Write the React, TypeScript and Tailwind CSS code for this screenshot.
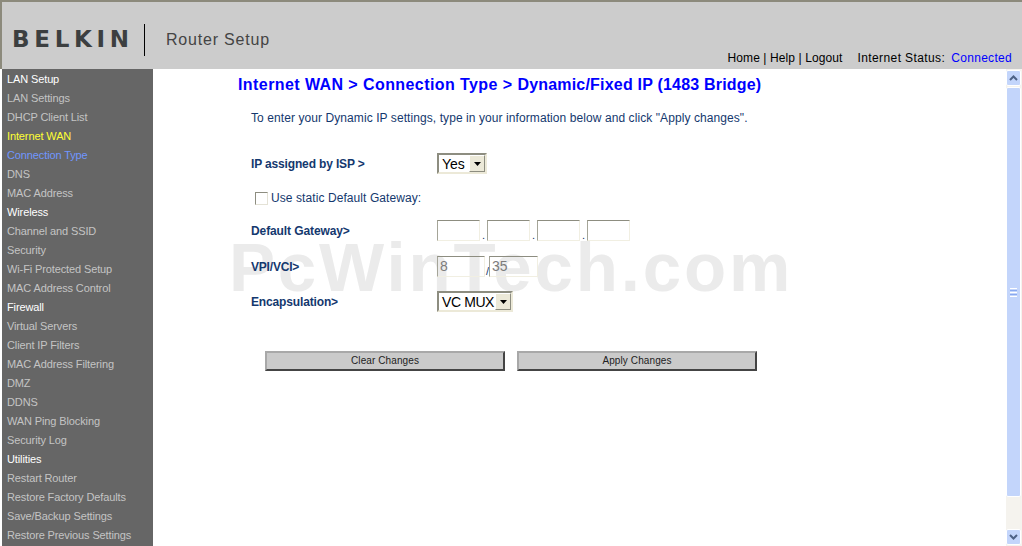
import React from 'react';

const font = "font-['Liberation_Sans',Arial,sans-serif]";

const menu: [string, string][] = [
  ['LAN Setup', 'h'], ['LAN Settings', 'n'], ['DHCP Client List', 'n'], ['Internet WAN', 'y'], ['Connection Type', 'b'], ['DNS', 'n'], ['MAC Address', 'n'],
  ['Wireless', 'h'], ['Channel and SSID', 'n'], ['Security', 'n'], ['Wi-Fi Protected Setup', 'n'], ['MAC Address Control', 'n'],
  ['Firewall', 'h'], ['Virtual Servers', 'n'], ['Client IP Filters', 'n'], ['MAC Address Filtering', 'n'], ['DMZ', 'n'], ['DDNS', 'n'], ['WAN Ping Blocking', 'n'], ['Security Log', 'n'],
  ['Utilities', 'h'], ['Restart Router', 'n'], ['Restore Factory Defaults', 'n'], ['Save/Backup Settings', 'n'], ['Restore Previous Settings', 'n'],
];

const menuColor: Record<string, string> = { h: 'text-white', n: 'text-[#c4c4c4]', y: 'text-[#ffff33]', b: 'text-[#7096ff]' };

const IpBox = ({ value = '', width = 'w-[43px]' }: { value?: string; width?: string }) => (
  <div className={`h-[21px] ${width} border border-t-[#8d8d80] border-l-[#a5a598] border-r-[#f1efe2] border-b-[#f1efe2] pl-[2px] text-[14px] leading-[19px] text-[#7c7c7c]`}>{value}</div>
);

const Select = ({ label, width, spacing = '' }: { label: string; width: string; spacing?: string }) => (
  <div className={`flex h-[21px] ${width} items-center border-2 border-[#8d8d80] border-r-[#ece9d8] border-b-[#ece9d8] bg-white`}>
    <span className={`flex-1 whitespace-nowrap pl-[3px] text-[14px] leading-none text-black ${spacing}`}>{label}</span>
    <span className="flex h-[17px] w-[16px] shrink-0 items-center justify-center border border-[#8d8d80] border-l-white border-t-white bg-[#ece9d8]">
      <svg width="7" height="4" viewBox="0 0 7 4"><path d="M0 0h7L3.5 4z" fill="#000" /></svg>
    </span>
  </div>
);

const ActionButton = ({ label }: { label: string }) => (
  <button type="button" className="h-[20px] w-[240px] border-2 border-[#a8a8a8] border-r-[#444] border-b-[#444] bg-[#cacaca] text-[10px] leading-none tracking-[0.1px] text-[#222]">{label}</button>
);

const ScrollArrow = ({ up }: { up?: boolean }) => (
  <div className="flex h-[16px] w-[15px] items-center justify-center rounded-[2px] border border-white bg-[#c3d5fb]">
    <svg width="9" height="6" viewBox="0 0 9 6"><path d={up ? 'M1 5l3.5-3.5L8 5' : 'M1 1l3.5 3.5L8 1'} fill="none" stroke="#4d6185" strokeWidth="2" /></svg>
  </div>
);

export default function App() {
  return (
    <div className={`flex h-[546px] w-[1022px] flex-col overflow-hidden bg-white ${font}`}>
      <header className="flex h-[69px] shrink-0 items-end border-l-2 border-t-2 border-[#8c8a7c] bg-[#cccccc]">
        <div className="flex h-full items-center pl-[10px] pt-[8px]">
          <span className="w-[132px] font-['DejaVu_Sans',sans-serif] text-[23px] font-bold leading-none tracking-[4.7px] text-[#3c3f40]">BELKIN</span>
          <div className="h-[32px] w-px bg-black" />
          <span className="ml-[21px] text-[16px] leading-none tracking-[0.8px] text-[#444]">Router Setup</span>
        </div>
        <div className="ml-auto flex pb-[4px] pr-[10px] text-[12px] leading-[14px] text-black">
          <span className="tracking-[0.1px]">Home | Help | Logout</span>
          <span className="ml-[15px] tracking-[0.4px]">Internet Status:</span>
          <span className="ml-[6px] tracking-[0.3px] text-[#0000ff]">Connected</span>
        </div>
      </header>
      <div className="flex min-h-0 flex-1">
        <nav className="ml-[2px] w-[151px] shrink-0 bg-[#666666] pl-[5px] text-[11px] tracking-[-0.12px]">
          {menu.map(([label, kind]) => (
            <div key={label} className={`h-[19px] leading-[20px] ${menuColor[kind]}`}>{label}</div>
          ))}
        </nav>
        <main className="relative min-w-0 flex-1 pl-[85px] pt-[6px]">
          <div className="pointer-events-none absolute left-[76px] top-[160px] text-[69px] font-bold leading-[78px] tracking-[2.85px] text-[#ebebeb]">PcWinTech.com</div>
          <div className="relative">
            <h1 className="h-[19px] whitespace-nowrap text-[16px] font-bold leading-[19px] text-[#0000ff]">
              <span className="tracking-[0.42px]">Internet WAN &gt; Connection Type &gt; </span>
              <span className="tracking-[0.2px]">Dynamic/Fixed IP (1483 Bridge)</span>
            </h1>
            <p className="ml-[13px] mt-[17px] text-[12px] leading-[14px] tracking-[0.08px] text-[#14386e]">To enter your Dynamic IP settings, type in your information below and click "Apply changes".</p>
            <div className="ml-[13px] mt-[28px] flex h-[21px] items-center">
              <span className="w-[186px] text-[12px] font-bold tracking-[-0.15px] text-[#14386e]">IP assigned by ISP &gt;</span>
              <Select label="Yes" width="w-[50px]" />
            </div>
            <div className="ml-[17px] mt-[17px] flex h-[14px] items-center">
              <div className="h-[13px] w-[13px] border border-[#8d8d80] border-b-[#e4e2d6] border-r-[#e4e2d6]" />
              <span className="ml-[3px] text-[12px] tracking-[0.08px] text-[#14386e]">Use static Default Gateway:</span>
            </div>
            <div className="ml-[13px] mt-[15px] flex h-[21px] items-center">
              <span className="w-[186px] text-[12px] font-bold tracking-[-0.1px] text-[#14386e]">Default Gateway&gt;</span>
              <div className="flex items-end gap-[2px] text-[11px] leading-[12px] text-[#14386e]">
                <IpBox /><span className="w-[3px]">.</span><IpBox /><span className="w-[3px]">.</span><IpBox /><span className="w-[3px]">.</span><IpBox />
              </div>
            </div>
            <div className="ml-[13px] mt-[15px] flex h-[21px] items-center">
              <span className="w-[186px] text-[12px] font-bold tracking-[-0.2px] text-[#14386e]">VPI/VCI&gt;</span>
              <IpBox value="8" width="w-[48px]" />
              <span className="ml-[1px] self-end text-[11px] leading-[12px] text-[#14386e]">/</span>
              <IpBox value="35" width="w-[49px]" />
            </div>
            <div className="ml-[13px] mt-[14px] flex h-[21px] items-center">
              <span className="w-[186px] text-[12px] font-bold tracking-[-0.15px] text-[#14386e]">Encapsulation&gt;</span>
              <Select label="VC MUX" width="w-[76px]" spacing="tracking-[-0.4px]" />
            </div>
            <div className="ml-[27px] mt-[39px] flex gap-[12px]">
              <ActionButton label="Clear Changes" />
              <ActionButton label="Apply Changes" />
            </div>
          </div>
        </main>
        <aside className="flex w-[16px] shrink-0 flex-col bg-[#f5f3ee] pt-[1px]">
          <ScrollArrow up />
          <div className="mt-[1px] flex h-[410px] w-[15px] items-center justify-center rounded-[2px] border border-white bg-[#c3d5fb]">
            <div className="flex w-[7px] flex-col gap-[1px]">
              <div className="h-px bg-white" /><div className="h-px bg-[#8aa9ef]" /><div className="h-px bg-white" /><div className="h-px bg-[#8aa9ef]" /><div className="h-px bg-white" />
            </div>
          </div>
          <div className="flex-1" />
          <ScrollArrow />
          <div className="h-px" />
        </aside>
      </div>
    </div>
  );
}
